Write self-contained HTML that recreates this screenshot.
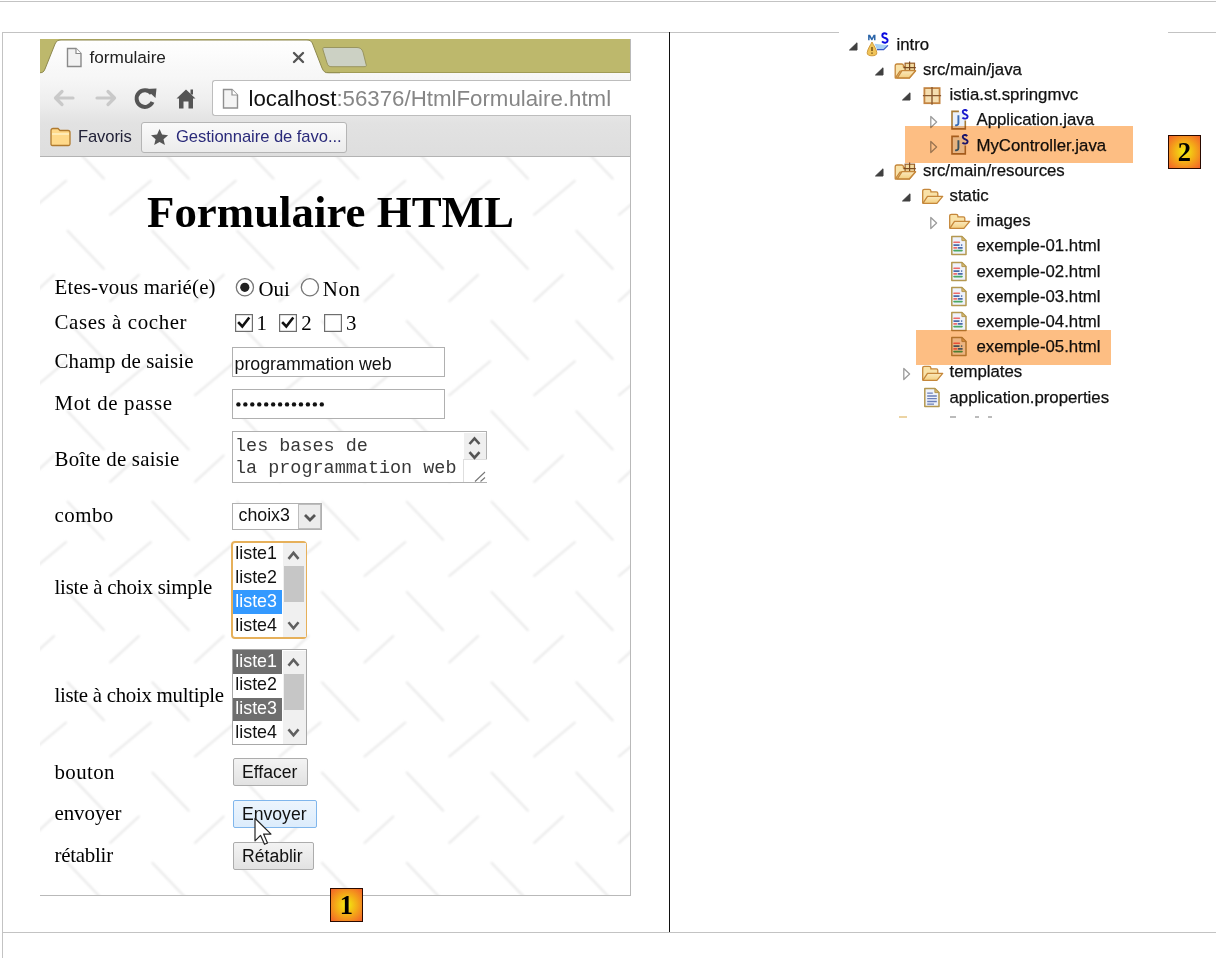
<!DOCTYPE html><html><head><meta charset="utf-8"><style>html,body{margin:0;padding:0;background:#fff;}#root{position:relative;width:1216px;height:958px;overflow:hidden;background:#fff}</style></head><body><div id="root"><div style="position:absolute;left:0px;top:1px;width:1216px;height:1px;background:#c3c3c3"></div>
<div style="position:absolute;left:2px;top:32px;width:1px;height:926px;background:#c3c3c3"></div>
<div style="position:absolute;left:2px;top:32px;width:1214px;height:1px;background:#c3c3c3"></div>
<div style="position:absolute;left:2px;top:932px;width:1214px;height:1px;background:#c3c3c3"></div>
<div style="position:absolute;left:669px;top:32px;width:1px;height:900px;background:#111"></div>
<div style="position:absolute;left:40px;top:39px;width:590px;height:34px;background:#bdb86c"></div>
<div style="position:absolute;left:40px;top:72px;width:590px;height:1px;background:#a09b55"></div>
<div style="position:absolute;left:40px;top:73px;width:590px;height:83px;background:linear-gradient(#f8f8f8 0%,#eeeeee 35%,#e2e2e2 60%,#dedede 100%)"></div>
<div style="position:absolute;left:40px;top:156px;width:590px;height:1px;background:#b3b3b3"></div>
<div style="position:absolute;left:630px;top:39px;width:1px;height:857px;background:#b9b9b9"></div>
<svg style="position:absolute;left:40px;top:39px;" width="300" height="36" viewBox="0 0 300 36"><defs><linearGradient id="tg" x1="0" y1="0" x2="0" y2="1"><stop offset="0" stop-color="#ffffff"/><stop offset="1" stop-color="#f7f7f7"/></linearGradient></defs><path d="M-1,35 L-1,34 C2,34 4,33 5,30 L15,5 C16.3,2 18,1 21,1 L267,1 C270,1 271.5,2 272.7,5 L282,29 C283.5,32.5 285,34 289,34 L300,34 L300,35 Z" fill="url(#tg)"/><path d="M-1,34 C2,34 4,33 5,30 L15,5 C16.3,2 18,1 21,1 L267,1 C270,1 271.5,2 272.7,5 L282,29 C283.5,32.5 285,34 289,34 L300,34" fill="none" stroke="#8d884e" stroke-width="1"/><rect x="0" y="34.5" width="300" height="1.5" fill="#f7f7f7"/></svg>
<svg style="position:absolute;left:320px;top:45px;" width="50" height="25" viewBox="0 0 50 25"><path d="M4,2.5 L37,2.5 C40,2.5 42,4 43,7 L46,19 C47,21 46,21.7 44,21.7 L12,21.7 C9,21.7 8,21 7,18 L3,5 C2.5,3.5 3,2.5 4,2.5 Z" fill="#ccd1c4" stroke="#999560" stroke-width="1"/></svg>
<svg style="position:absolute;left:66px;top:47px;" width="17" height="21" viewBox="0 0 17 21"><path d="M1.5,1.5 L10,1.5 L15,6.5 L15,19.5 L1.5,19.5 Z" fill="#f2f2f2" stroke="#8a8a8a" stroke-width="1.4"/><path d="M10,1.5 L10,6.5 L15,6.5" fill="#fff" stroke="#8a8a8a" stroke-width="1.2"/></svg>
<div style="position:absolute;left:89.5px;top:47.93px;font-family:'Liberation Sans', sans-serif;font-weight:normal;font-size:17.2px;line-height:19.21px;color:#222;white-space:pre;letter-spacing:0.000px;">formulaire</div>
<svg style="position:absolute;left:292px;top:51px;" width="13" height="13" viewBox="0 0 13 13"><path d="M2,2 L11,11 M11,2 L2,11" stroke="#555" stroke-width="2.4" stroke-linecap="round"/></svg>
<svg style="position:absolute;left:50px;top:86px;" width="70" height="25" viewBox="0 0 70 25"><g stroke="#c9c9c9" stroke-width="3.2" fill="none" stroke-linecap="round" stroke-linejoin="round"><path d="M6,12 L23,12 M12,5.5 L5.5,12 L12,18.5"/><path d="M47,12 L64,12 M58,5.5 L64.5,12 L58,18.5"/></g></svg>
<svg style="position:absolute;left:132px;top:86px;" width="28" height="25" viewBox="0 0 28 25"><path d="M19.5,7.5 A8.3,8.3 0 1 0 20.5,16" fill="none" stroke="#555" stroke-width="4"/><path d="M14,3 L24.5,2.5 L23.5,12 Z" fill="#555"/></svg>
<svg style="position:absolute;left:174px;top:86px;" width="24" height="25" viewBox="0 0 24 25"><path d="M2.5,12.5 L12,3.5 L21.5,12.5 L19,12.5 L19,22.5 L14.5,22.5 L14.5,15.5 L9.5,15.5 L9.5,22.5 L5,22.5 L5,12.5 Z" fill="#555"/><rect x="16.5" y="3.5" width="2.5" height="5" fill="#555"/></svg>
<div style="position:absolute;left:212.2px;top:80px;width:419px;height:36.4px;background:#fff;border:1px solid #bdbdbd;border-right:none;border-radius:3px 0 0 3px;box-sizing:border-box"></div>
<svg style="position:absolute;left:222px;top:88px;" width="18" height="22" viewBox="0 0 18 22"><path d="M1.5,1.5 L10,1.5 L15.5,7 L15.5,20 L1.5,20 Z" fill="#f4f4f4" stroke="#8f8f8f" stroke-width="1.4"/><path d="M10,1.5 L10,7 L15.5,7" fill="#fff" stroke="#8f8f8f" stroke-width="1.2"/></svg>
<div style="position:absolute;left:248.5px;top:86.55px;font-family:'Liberation Sans', sans-serif;font-weight:normal;font-size:22.27px;line-height:24.88px;color:#111;white-space:pre;letter-spacing:0.000px;">localhost<span style="color:#868686">:56376/HtmlFormulaire.html</span></div>
<svg style="position:absolute;left:49px;top:126px;" width="24" height="21" viewBox="0 0 24 21"><path d="M2,4.5 C2,3 3,2.5 4,2.5 L9,2.5 L11,4.5 L19,4.5 C20.5,4.5 21,5.5 21,6.5 L21,18 C21,19 20.5,19.5 19.5,19.5 L3.5,19.5 C2.5,19.5 2,19 2,18 Z" fill="#ffd98a" stroke="#b07a2e" stroke-width="1.3"/><path d="M3,8 L20,8" stroke="#fff0c4" stroke-width="1.5"/></svg>
<div style="position:absolute;left:78px;top:128.18px;font-family:'Liberation Sans', sans-serif;font-weight:normal;font-size:16.6px;line-height:18.54px;color:#222238;white-space:pre;letter-spacing:-0.120px;">Favoris</div>
<div style="position:absolute;left:141px;top:122px;width:206px;height:31px;background:linear-gradient(#fafafa,#ececec);border:1px solid #b5b5b5;border-radius:3px;box-sizing:border-box"></div>
<svg style="position:absolute;left:149px;top:127px;" width="21" height="20" viewBox="0 0 21 20"><path transform="translate(0.9,0.6) scale(0.92)" d="M10.5,1.5 L13.2,7.6 L19.8,8.2 L14.8,12.6 L16.3,19 L10.5,15.6 L4.7,19 L6.2,12.6 L1.2,8.2 L7.8,7.6 Z" fill="#555"/></svg>
<div style="position:absolute;left:176px;top:128.18px;font-family:'Liberation Sans', sans-serif;font-weight:normal;font-size:16.6px;line-height:18.54px;color:#2a2a7a;white-space:pre;letter-spacing:-0.060px;">Gestionnaire de favo...</div>
<svg style="position:absolute;left:40px;top:157px;" width="590" height="738" viewBox="0 0 590 738"><defs><filter id="pb" x="-5%" y="-5%" width="110%" height="110%"><feGaussianBlur stdDeviation="0.8"/></filter></defs><rect width="590" height="738" fill="#fff"/><path d="M-142.6,-107.4 l37.5,39.3 M-184.9,-122.4 l42,-35 M-142.6,-17.1 l37.5,39.3 M-184.9,-35.8 l30,-27.5 M-142.6,73.2 l37.5,39.3 M-184.9,58.2 l42,-35 M-142.6,163.5 l37.5,39.3 M-184.9,144.8 l30,-27.5 M-142.6,253.8 l37.5,39.3 M-184.9,238.8 l42,-35 M-142.6,344.1 l37.5,39.3 M-184.9,325.4 l30,-27.5 M-142.6,434.4 l37.5,39.3 M-184.9,419.4 l42,-35 M-142.6,524.7 l37.5,39.3 M-184.9,506.0 l30,-27.5 M-142.6,615.0 l37.5,39.3 M-184.9,600.0 l42,-35 M-142.6,705.3 l37.5,39.3 M-184.9,686.6 l30,-27.5 M-142.6,795.6 l37.5,39.3 M-184.9,780.6 l42,-35 M-57.8,-107.4 l37.5,39.3 M-100.1,-122.4 l42,-35 M-57.8,-17.1 l37.5,39.3 M-100.1,-35.8 l30,-27.5 M-57.8,73.2 l37.5,39.3 M-100.1,58.2 l42,-35 M-57.8,163.5 l37.5,39.3 M-100.1,144.8 l30,-27.5 M-57.8,253.8 l37.5,39.3 M-100.1,238.8 l42,-35 M-57.8,344.1 l37.5,39.3 M-100.1,325.4 l30,-27.5 M-57.8,434.4 l37.5,39.3 M-100.1,419.4 l42,-35 M-57.8,524.7 l37.5,39.3 M-100.1,506.0 l30,-27.5 M-57.8,615.0 l37.5,39.3 M-100.1,600.0 l42,-35 M-57.8,705.3 l37.5,39.3 M-100.1,686.6 l30,-27.5 M-57.8,795.6 l37.5,39.3 M-100.1,780.6 l42,-35 M27.0,-107.4 l37.5,39.3 M-15.3,-122.4 l42,-35 M27.0,-17.1 l37.5,39.3 M-15.3,-35.8 l30,-27.5 M27.0,73.2 l37.5,39.3 M-15.3,58.2 l42,-35 M27.0,163.5 l37.5,39.3 M-15.3,144.8 l30,-27.5 M27.0,253.8 l37.5,39.3 M-15.3,238.8 l42,-35 M27.0,344.1 l37.5,39.3 M-15.3,325.4 l30,-27.5 M27.0,434.4 l37.5,39.3 M-15.3,419.4 l42,-35 M27.0,524.7 l37.5,39.3 M-15.3,506.0 l30,-27.5 M27.0,615.0 l37.5,39.3 M-15.3,600.0 l42,-35 M27.0,705.3 l37.5,39.3 M-15.3,686.6 l30,-27.5 M27.0,795.6 l37.5,39.3 M-15.3,780.6 l42,-35 M111.8,-107.4 l37.5,39.3 M69.5,-122.4 l42,-35 M111.8,-17.1 l37.5,39.3 M69.5,-35.8 l30,-27.5 M111.8,73.2 l37.5,39.3 M69.5,58.2 l42,-35 M111.8,163.5 l37.5,39.3 M69.5,144.8 l30,-27.5 M111.8,253.8 l37.5,39.3 M69.5,238.8 l42,-35 M111.8,344.1 l37.5,39.3 M69.5,325.4 l30,-27.5 M111.8,434.4 l37.5,39.3 M69.5,419.4 l42,-35 M111.8,524.7 l37.5,39.3 M69.5,506.0 l30,-27.5 M111.8,615.0 l37.5,39.3 M69.5,600.0 l42,-35 M111.8,705.3 l37.5,39.3 M69.5,686.6 l30,-27.5 M111.8,795.6 l37.5,39.3 M69.5,780.6 l42,-35 M196.6,-107.4 l37.5,39.3 M154.3,-122.4 l42,-35 M196.6,-17.1 l37.5,39.3 M154.3,-35.8 l30,-27.5 M196.6,73.2 l37.5,39.3 M154.3,58.2 l42,-35 M196.6,163.5 l37.5,39.3 M154.3,144.8 l30,-27.5 M196.6,253.8 l37.5,39.3 M154.3,238.8 l42,-35 M196.6,344.1 l37.5,39.3 M154.3,325.4 l30,-27.5 M196.6,434.4 l37.5,39.3 M154.3,419.4 l42,-35 M196.6,524.7 l37.5,39.3 M154.3,506.0 l30,-27.5 M196.6,615.0 l37.5,39.3 M154.3,600.0 l42,-35 M196.6,705.3 l37.5,39.3 M154.3,686.6 l30,-27.5 M196.6,795.6 l37.5,39.3 M154.3,780.6 l42,-35 M281.4,-107.4 l37.5,39.3 M239.1,-122.4 l42,-35 M281.4,-17.1 l37.5,39.3 M239.1,-35.8 l30,-27.5 M281.4,73.2 l37.5,39.3 M239.1,58.2 l42,-35 M281.4,163.5 l37.5,39.3 M239.1,144.8 l30,-27.5 M281.4,253.8 l37.5,39.3 M239.1,238.8 l42,-35 M281.4,344.1 l37.5,39.3 M239.1,325.4 l30,-27.5 M281.4,434.4 l37.5,39.3 M239.1,419.4 l42,-35 M281.4,524.7 l37.5,39.3 M239.1,506.0 l30,-27.5 M281.4,615.0 l37.5,39.3 M239.1,600.0 l42,-35 M281.4,705.3 l37.5,39.3 M239.1,686.6 l30,-27.5 M281.4,795.6 l37.5,39.3 M239.1,780.6 l42,-35 M366.2,-107.4 l37.5,39.3 M323.9,-122.4 l42,-35 M366.2,-17.1 l37.5,39.3 M323.9,-35.8 l30,-27.5 M366.2,73.2 l37.5,39.3 M323.9,58.2 l42,-35 M366.2,163.5 l37.5,39.3 M323.9,144.8 l30,-27.5 M366.2,253.8 l37.5,39.3 M323.9,238.8 l42,-35 M366.2,344.1 l37.5,39.3 M323.9,325.4 l30,-27.5 M366.2,434.4 l37.5,39.3 M323.9,419.4 l42,-35 M366.2,524.7 l37.5,39.3 M323.9,506.0 l30,-27.5 M366.2,615.0 l37.5,39.3 M323.9,600.0 l42,-35 M366.2,705.3 l37.5,39.3 M323.9,686.6 l30,-27.5 M366.2,795.6 l37.5,39.3 M323.9,780.6 l42,-35 M451.0,-107.4 l37.5,39.3 M408.7,-122.4 l42,-35 M451.0,-17.1 l37.5,39.3 M408.7,-35.8 l30,-27.5 M451.0,73.2 l37.5,39.3 M408.7,58.2 l42,-35 M451.0,163.5 l37.5,39.3 M408.7,144.8 l30,-27.5 M451.0,253.8 l37.5,39.3 M408.7,238.8 l42,-35 M451.0,344.1 l37.5,39.3 M408.7,325.4 l30,-27.5 M451.0,434.4 l37.5,39.3 M408.7,419.4 l42,-35 M451.0,524.7 l37.5,39.3 M408.7,506.0 l30,-27.5 M451.0,615.0 l37.5,39.3 M408.7,600.0 l42,-35 M451.0,705.3 l37.5,39.3 M408.7,686.6 l30,-27.5 M451.0,795.6 l37.5,39.3 M408.7,780.6 l42,-35 M535.8,-107.4 l37.5,39.3 M493.5,-122.4 l42,-35 M535.8,-17.1 l37.5,39.3 M493.5,-35.8 l30,-27.5 M535.8,73.2 l37.5,39.3 M493.5,58.2 l42,-35 M535.8,163.5 l37.5,39.3 M493.5,144.8 l30,-27.5 M535.8,253.8 l37.5,39.3 M493.5,238.8 l42,-35 M535.8,344.1 l37.5,39.3 M493.5,325.4 l30,-27.5 M535.8,434.4 l37.5,39.3 M493.5,419.4 l42,-35 M535.8,524.7 l37.5,39.3 M493.5,506.0 l30,-27.5 M535.8,615.0 l37.5,39.3 M493.5,600.0 l42,-35 M535.8,705.3 l37.5,39.3 M493.5,686.6 l30,-27.5 M535.8,795.6 l37.5,39.3 M493.5,780.6 l42,-35 M620.6,-107.4 l37.5,39.3 M578.3,-122.4 l42,-35 M620.6,-17.1 l37.5,39.3 M578.3,-35.8 l30,-27.5 M620.6,73.2 l37.5,39.3 M578.3,58.2 l42,-35 M620.6,163.5 l37.5,39.3 M578.3,144.8 l30,-27.5 M620.6,253.8 l37.5,39.3 M578.3,238.8 l42,-35 M620.6,344.1 l37.5,39.3 M578.3,325.4 l30,-27.5 M620.6,434.4 l37.5,39.3 M578.3,419.4 l42,-35 M620.6,524.7 l37.5,39.3 M578.3,506.0 l30,-27.5 M620.6,615.0 l37.5,39.3 M578.3,600.0 l42,-35 M620.6,705.3 l37.5,39.3 M578.3,686.6 l30,-27.5 M620.6,795.6 l37.5,39.3 M578.3,780.6 l42,-35 M705.4,-107.4 l37.5,39.3 M663.1,-122.4 l42,-35 M705.4,-17.1 l37.5,39.3 M663.1,-35.8 l30,-27.5 M705.4,73.2 l37.5,39.3 M663.1,58.2 l42,-35 M705.4,163.5 l37.5,39.3 M663.1,144.8 l30,-27.5 M705.4,253.8 l37.5,39.3 M663.1,238.8 l42,-35 M705.4,344.1 l37.5,39.3 M663.1,325.4 l30,-27.5 M705.4,434.4 l37.5,39.3 M663.1,419.4 l42,-35 M705.4,524.7 l37.5,39.3 M663.1,506.0 l30,-27.5 M705.4,615.0 l37.5,39.3 M663.1,600.0 l42,-35 M705.4,705.3 l37.5,39.3 M663.1,686.6 l30,-27.5 M705.4,795.6 l37.5,39.3 M663.1,780.6 l42,-35 M790.2,-107.4 l37.5,39.3 M747.9,-122.4 l42,-35 M790.2,-17.1 l37.5,39.3 M747.9,-35.8 l30,-27.5 M790.2,73.2 l37.5,39.3 M747.9,58.2 l42,-35 M790.2,163.5 l37.5,39.3 M747.9,144.8 l30,-27.5 M790.2,253.8 l37.5,39.3 M747.9,238.8 l42,-35 M790.2,344.1 l37.5,39.3 M747.9,325.4 l30,-27.5 M790.2,434.4 l37.5,39.3 M747.9,419.4 l42,-35 M790.2,524.7 l37.5,39.3 M747.9,506.0 l30,-27.5 M790.2,615.0 l37.5,39.3 M747.9,600.0 l42,-35 M790.2,705.3 l37.5,39.3 M747.9,686.6 l30,-27.5 M790.2,795.6 l37.5,39.3 M747.9,780.6 l42,-35" stroke="#e8e8e8" stroke-width="2" fill="none" filter="url(#pb)"/></svg>
<div style="position:absolute;left:40px;top:895px;width:591px;height:1px;background:#b9b9b9"></div>
<div style="position:absolute;left:147px;top:188.40px;font-family:'Liberation Serif', serif;font-weight:bold;font-size:44.89px;line-height:49.69px;color:#000;white-space:pre;letter-spacing:0.000px;">Formulaire HTML</div>
<div style="position:absolute;left:54.5px;top:275.78px;font-family:'Liberation Serif', serif;font-weight:normal;font-size:20.9px;line-height:23.14px;color:#000;white-space:pre;letter-spacing:0.159px;">Etes-vous marié(e)</div>
<div style="position:absolute;left:54.5px;top:310.58px;font-family:'Liberation Serif', serif;font-weight:normal;font-size:20.9px;line-height:23.14px;color:#000;white-space:pre;letter-spacing:0.608px;">Cases à cocher</div>
<div style="position:absolute;left:54.5px;top:349.58px;font-family:'Liberation Serif', serif;font-weight:normal;font-size:20.9px;line-height:23.14px;color:#000;white-space:pre;letter-spacing:0.143px;">Champ de saisie</div>
<div style="position:absolute;left:54.5px;top:392.38px;font-family:'Liberation Serif', serif;font-weight:normal;font-size:20.9px;line-height:23.14px;color:#000;white-space:pre;letter-spacing:0.655px;">Mot de passe</div>
<div style="position:absolute;left:54.5px;top:447.68px;font-family:'Liberation Serif', serif;font-weight:normal;font-size:20.9px;line-height:23.14px;color:#000;white-space:pre;letter-spacing:0.214px;">Boîte de saisie</div>
<div style="position:absolute;left:54.5px;top:504.08px;font-family:'Liberation Serif', serif;font-weight:normal;font-size:20.9px;line-height:23.14px;color:#000;white-space:pre;letter-spacing:0.475px;">combo</div>
<div style="position:absolute;left:54.5px;top:576.38px;font-family:'Liberation Serif', serif;font-weight:normal;font-size:20.9px;line-height:23.14px;color:#000;white-space:pre;letter-spacing:-0.216px;">liste à choix simple</div>
<div style="position:absolute;left:54.5px;top:684.38px;font-family:'Liberation Serif', serif;font-weight:normal;font-size:20.9px;line-height:23.14px;color:#000;white-space:pre;letter-spacing:-0.295px;">liste à choix multiple</div>
<div style="position:absolute;left:54.5px;top:760.68px;font-family:'Liberation Serif', serif;font-weight:normal;font-size:20.9px;line-height:23.14px;color:#000;white-space:pre;letter-spacing:0.380px;">bouton</div>
<div style="position:absolute;left:54.5px;top:801.78px;font-family:'Liberation Serif', serif;font-weight:normal;font-size:20.9px;line-height:23.14px;color:#000;white-space:pre;letter-spacing:-0.050px;">envoyer</div>
<div style="position:absolute;left:54.5px;top:843.88px;font-family:'Liberation Serif', serif;font-weight:normal;font-size:20.9px;line-height:23.14px;color:#000;white-space:pre;letter-spacing:-0.243px;">rétablir</div>
<svg style="position:absolute;left:235px;top:278px;" width="20" height="20" viewBox="0 0 20 20"><circle cx="9.9" cy="9.3" r="8.6" fill="#fff" stroke="#777" stroke-width="1.3"/><circle cx="9.8" cy="9.3" r="4.6" fill="#222"/></svg>
<div style="position:absolute;left:258.5px;top:277.68px;font-family:'Liberation Serif', serif;font-weight:normal;font-size:20.9px;line-height:23.14px;color:#000;white-space:pre;letter-spacing:0.000px;">Oui</div>
<svg style="position:absolute;left:300px;top:278px;" width="20" height="20" viewBox="0 0 20 20"><circle cx="9.9" cy="9.3" r="8.6" fill="#fff" stroke="#777" stroke-width="1.3"/></svg>
<div style="position:absolute;left:322.8px;top:277.68px;font-family:'Liberation Serif', serif;font-weight:normal;font-size:20.9px;line-height:23.14px;color:#000;white-space:pre;letter-spacing:0.600px;">Non</div>
<svg style="position:absolute;left:234.6px;top:313.7px;" width="18" height="18" viewBox="0 0 18 18"><rect x="0.6" y="0.6" width="16.8" height="16.8" fill="#fff" stroke="#6e6e6e" stroke-width="1.2"/><path d="M4,9 L7.3,12.5 L13.5,4.5" fill="none" stroke="#111" stroke-width="2.6" stroke-linecap="square"/></svg>
<div style="position:absolute;left:256.6px;top:312.08px;font-family:'Liberation Serif', serif;font-weight:normal;font-size:20.9px;line-height:23.14px;color:#000;white-space:pre;letter-spacing:0.000px;">1</div>
<svg style="position:absolute;left:279.2px;top:313.7px;" width="18" height="18" viewBox="0 0 18 18"><rect x="0.6" y="0.6" width="16.8" height="16.8" fill="#fff" stroke="#6e6e6e" stroke-width="1.2"/><path d="M4,9 L7.3,12.5 L13.5,4.5" fill="none" stroke="#111" stroke-width="2.6" stroke-linecap="square"/></svg>
<div style="position:absolute;left:301.3px;top:312.08px;font-family:'Liberation Serif', serif;font-weight:normal;font-size:20.9px;line-height:23.14px;color:#000;white-space:pre;letter-spacing:0.000px;">2</div>
<svg style="position:absolute;left:324.3px;top:313.7px;" width="18" height="18" viewBox="0 0 18 18"><rect x="0.6" y="0.6" width="16.8" height="16.8" fill="#fff" stroke="#6e6e6e" stroke-width="1.2"/></svg>
<div style="position:absolute;left:346px;top:312.08px;font-family:'Liberation Serif', serif;font-weight:normal;font-size:20.9px;line-height:23.14px;color:#000;white-space:pre;letter-spacing:0.000px;">3</div>
<div style="position:absolute;left:232px;top:347px;width:213px;height:30px;background:#fff;border:1.5px solid #b0b0b0;box-sizing:border-box"></div>
<div style="position:absolute;left:234.5px;top:354.69px;font-family:'Liberation Sans', sans-serif;font-weight:normal;font-size:17.8px;line-height:19.88px;color:#111;white-space:pre;letter-spacing:0.000px;">programmation web</div>
<div style="position:absolute;left:232px;top:389px;width:213px;height:30px;background:#fff;border:1.5px solid #b0b0b0;box-sizing:border-box"></div>
<svg style="position:absolute;left:235.5px;top:402.4px;" width="95" height="5" viewBox="0 0 95 5"><circle cx="2.40" cy="2.4" r="2.2" fill="#111"/><circle cx="9.35" cy="2.4" r="2.2" fill="#111"/><circle cx="16.30" cy="2.4" r="2.2" fill="#111"/><circle cx="23.25" cy="2.4" r="2.2" fill="#111"/><circle cx="30.20" cy="2.4" r="2.2" fill="#111"/><circle cx="37.15" cy="2.4" r="2.2" fill="#111"/><circle cx="44.10" cy="2.4" r="2.2" fill="#111"/><circle cx="51.05" cy="2.4" r="2.2" fill="#111"/><circle cx="58.00" cy="2.4" r="2.2" fill="#111"/><circle cx="64.95" cy="2.4" r="2.2" fill="#111"/><circle cx="71.90" cy="2.4" r="2.2" fill="#111"/><circle cx="78.85" cy="2.4" r="2.2" fill="#111"/><circle cx="85.80" cy="2.4" r="2.2" fill="#111"/></svg>
<div style="position:absolute;left:232px;top:431px;width:255px;height:52px;background:#fff;border:1.5px solid #b0b0b0;box-sizing:border-box"></div>
<div style="position:absolute;left:235px;top:436.91px;font-family:'Liberation Mono', monospace;font-weight:normal;font-size:18.47px;line-height:20.93px;color:#383838;white-space:pre;letter-spacing:0.000px;">les bases de</div>
<div style="position:absolute;left:235px;top:459.21px;font-family:'Liberation Mono', monospace;font-weight:normal;font-size:18.47px;line-height:20.93px;color:#383838;white-space:pre;letter-spacing:0.000px;">la programmation web</div>
<div style="position:absolute;left:463.5px;top:432.5px;width:22.5px;height:13.3px;background:#efefef"></div>
<div style="position:absolute;left:463.5px;top:446.3px;width:22.5px;height:12.7px;background:#efefef"></div>
<div style="position:absolute;left:462.5px;top:459px;width:24px;height:22.5px;background:#fff;border-left:1px solid #dedede;border-top:1px solid #dedede;box-sizing:border-box"></div>
<svg style="position:absolute;left:463px;top:432px;" width="23" height="28" viewBox="0 0 23 28"><path d="M6.5,12 L11.5,6.5 L16.5,12 M6.5,20.2 L11.5,25.7 L16.5,20.2" fill="none" stroke="#555" stroke-width="2.6" stroke-linejoin="miter"/></svg>
<svg style="position:absolute;left:470px;top:469px;" width="16" height="13" viewBox="0 0 16 13"><path d="M15,3 L5,12.5 M15,8.5 L10.5,12.5" stroke="#777" stroke-width="1.1"/></svg>
<div style="position:absolute;left:232px;top:502.5px;width:90px;height:27px;background:#fff;border:1.5px solid #b0b0b0;box-sizing:border-box"></div>
<div style="position:absolute;left:297.5px;top:503.5px;width:23.5px;height:25px;background:#ececec;border:1.5px solid #bdbdbd;box-sizing:border-box"></div>
<svg style="position:absolute;left:297.5px;top:503.5px;" width="24" height="25" viewBox="0 0 24 25"><path d="M7,11 L12,16 L17,11" fill="none" stroke="#555" stroke-width="2.8"/></svg>
<div style="position:absolute;left:238.5px;top:506.49px;font-family:'Liberation Sans', sans-serif;font-weight:normal;font-size:17.8px;line-height:19.88px;color:#111;white-space:pre;letter-spacing:0.000px;">choix3</div>
<div style="position:absolute;left:231.2px;top:540.7px;width:76.1px;height:97.9px;background:#fff;border:2px solid #e6b05a;border-radius:4px;box-sizing:border-box"></div>
<div style="position:absolute;left:283.4px;top:542.7px;width:22.3px;height:93.89999999999998px;background:#f0f0f0"></div>
<div style="position:absolute;left:284px;top:566.2px;width:20.1px;height:36.2px;background:#c6c6c6"></div>
<svg style="position:absolute;left:283.4px;top:540.7px;" width="23" height="97.89999999999998" viewBox="0 0 23 97.89999999999998"><path d="M5.5,17.8 L10.5,11.799999999999999 L15.5,17.8 M5.5,81.3 L10.5,87.3 L15.5,81.3" fill="none" stroke="#606060" stroke-width="2.6"/></svg>
<div style="position:absolute;left:235.3px;top:544.44px;font-family:'Liberation Sans', sans-serif;font-weight:normal;font-size:17.86px;line-height:19.95px;color:#111;white-space:pre;letter-spacing:0.000px;">liste1</div>
<div style="position:absolute;left:235.3px;top:568.19px;font-family:'Liberation Sans', sans-serif;font-weight:normal;font-size:17.86px;line-height:19.95px;color:#111;white-space:pre;letter-spacing:0.000px;">liste2</div>
<div style="position:absolute;left:233px;top:590.2px;width:48.8px;height:23.6px;background:#3399ff"></div>
<div style="position:absolute;left:235.3px;top:591.94px;font-family:'Liberation Sans', sans-serif;font-weight:normal;font-size:17.86px;line-height:19.95px;color:#fff;white-space:pre;letter-spacing:0.000px;">liste3</div>
<div style="position:absolute;left:235.3px;top:615.69px;font-family:'Liberation Sans', sans-serif;font-weight:normal;font-size:17.86px;line-height:19.95px;color:#111;white-space:pre;letter-spacing:0.000px;">liste4</div>
<div style="position:absolute;left:232px;top:649.3px;width:74.8px;height:95.8px;background:#fff;border:1.5px solid #a8a8a8;border-radius:0px;box-sizing:border-box"></div>
<div style="position:absolute;left:283.4px;top:650.8px;width:22.3px;height:92.80000000000007px;background:#f0f0f0"></div>
<div style="position:absolute;left:284px;top:674.3px;width:20.1px;height:35.7px;background:#c6c6c6"></div>
<svg style="position:absolute;left:283.4px;top:649.3px;" width="23" height="95.80000000000007" viewBox="0 0 23 95.80000000000007"><path d="M5.5,16.7 L10.5,10.7 L15.5,16.7 M5.5,80.3 L10.5,86.3 L15.5,80.3" fill="none" stroke="#606060" stroke-width="2.6"/></svg>
<div style="position:absolute;left:233px;top:650.0px;width:48.8px;height:23.6px;background:#6e6e6e"></div>
<div style="position:absolute;left:235.3px;top:651.74px;font-family:'Liberation Sans', sans-serif;font-weight:normal;font-size:17.86px;line-height:19.95px;color:#fff;white-space:pre;letter-spacing:0.000px;">liste1</div>
<div style="position:absolute;left:235.3px;top:675.49px;font-family:'Liberation Sans', sans-serif;font-weight:normal;font-size:17.86px;line-height:19.95px;color:#111;white-space:pre;letter-spacing:0.000px;">liste2</div>
<div style="position:absolute;left:233px;top:697.5px;width:48.8px;height:23.6px;background:#6e6e6e"></div>
<div style="position:absolute;left:235.3px;top:699.24px;font-family:'Liberation Sans', sans-serif;font-weight:normal;font-size:17.86px;line-height:19.95px;color:#fff;white-space:pre;letter-spacing:0.000px;">liste3</div>
<div style="position:absolute;left:235.3px;top:722.99px;font-family:'Liberation Sans', sans-serif;font-weight:normal;font-size:17.86px;line-height:19.95px;color:#111;white-space:pre;letter-spacing:0.000px;">liste4</div>
<div style="position:absolute;left:233px;top:758.1px;width:75.19999999999999px;height:27.600000000000023px;background:linear-gradient(#f3f3f3,#e2e2e2);border:1.5px solid #acacac;box-sizing:border-box;border-radius:2px"></div>
<div style="position:absolute;left:242px;top:762.87px;font-family:'Liberation Sans', sans-serif;font-weight:normal;font-size:17.6px;line-height:19.66px;color:#111;white-space:pre;letter-spacing:0.000px;">Effacer</div>
<div style="position:absolute;left:233px;top:800.1px;width:84px;height:27.600000000000023px;background:linear-gradient(#edf5fd,#dcecfc);border:1.5px solid #80b6ec;box-sizing:border-box;border-radius:2px"></div>
<div style="position:absolute;left:242px;top:804.87px;font-family:'Liberation Sans', sans-serif;font-weight:normal;font-size:17.6px;line-height:19.66px;color:#111;white-space:pre;letter-spacing:0.000px;">Envoyer</div>
<div style="position:absolute;left:233px;top:842.1px;width:80.80000000000001px;height:27.600000000000023px;background:linear-gradient(#f3f3f3,#e2e2e2);border:1.5px solid #acacac;box-sizing:border-box;border-radius:2px"></div>
<div style="position:absolute;left:242px;top:846.87px;font-family:'Liberation Sans', sans-serif;font-weight:normal;font-size:17.6px;line-height:19.66px;color:#111;white-space:pre;letter-spacing:0.000px;">Rétablir</div>
<svg style="position:absolute;left:252.8px;top:816.3px;" width="22" height="32" viewBox="0 0 22 32"><path d="M2,2.3 L2,24.8 L7.5,19.3 L11.5,28.3 L14.5,27 L10.6,18.1 L18,18.1 Z" fill="#fff" stroke="#222" stroke-width="1.2" stroke-linejoin="round"/></svg>
<div style="position:absolute;left:330px;top:888px;width:33px;height:34px;box-sizing:border-box;border:1.5px solid #2a0a00;background:radial-gradient(circle at 50% 50%,#f2ee10 0%,#f4a818 50%,#f3602a 100%)"></div>
<div style="position:absolute;left:339.8px;top:890.69px;font-family:'Liberation Serif', serif;font-weight:bold;font-size:26.5px;line-height:29.34px;color:#000;white-space:pre;letter-spacing:0.000px;">1</div>
<div style="position:absolute;left:839px;top:32px;width:329px;height:386px;background:#fff"></div>
<svg style="position:absolute;left:847.8px;top:40.5px;" width="11" height="11" viewBox="0 0 11 11"><path d="M1.5,9 L9,1.8 L9,9 Z" fill="#404040" stroke="#404040" stroke-width="1" stroke-linejoin="round"/></svg>
<svg style="position:absolute;left:862px;top:30px;" width="30" height="28" viewBox="0 0 30 28"><path d="M6.1,10.3 L6.1,4.7 L8.1,4.7 L9.9,7.9 L11.6,4.7 L13.5,4.7 L13.5,10.3 L12,10.3 L12,7.2 L10.3,10.2 L9.4,10.2 L7.6,7.2 L7.6,10.3 Z" fill="#2a64a8"/><path d="M25,4.6 C24.2,3.4 22.6,3 21.5,3.5 C19.9,4.2 19.9,6.6 21.6,7.4 L24.3,8.5 C26.3,9.5 26,12.4 23.4,12.7 C22,12.9 20.9,12.4 20.1,11.4" fill="none" stroke="#0a0ae0" stroke-width="2"/><path d="M12.5,13.8 L26,15.3 L21.6,19.7 L15,19.7 Z" fill="#a8d0f4"/><path d="M15,19.7 L21.6,19.7 L26,15.3" fill="none" stroke="#3a5ac8" stroke-width="1.2"/><path d="M10,12 C8.5,15 5.6,19 5.2,22.6 C5,25 7,25.8 10,25.8 C13,25.8 15,25 14.8,22.6 C14.4,19 11.5,15 10,12 Z" fill="#f0c45a" stroke="#cc9433" stroke-width="0.9"/><path d="M10,17 L10,21 M10,22.5 L10,23.8" stroke="#6a4810" stroke-width="1.4"/></svg>
<div style="position:absolute;left:896.5px;top:35.70px;font-family:'Liberation Sans', sans-serif;font-weight:normal;font-size:16.8px;line-height:18.77px;color:#111;white-space:pre;letter-spacing:0.000px;-webkit-text-stroke:0.25px #111">intro</div>
<svg style="position:absolute;left:874.3px;top:65.7px;" width="11" height="11" viewBox="0 0 11 11"><path d="M1.5,9 L9,1.8 L9,9 Z" fill="#404040" stroke="#404040" stroke-width="1" stroke-linejoin="round"/></svg>
<svg style="position:absolute;left:894px;top:60.8px;" width="23" height="18" viewBox="0 0 23 18"><defs><linearGradient id="fgr" x1="0" y1="0" x2="0" y2="1"><stop offset="0" stop-color="#fbe9bd"/><stop offset="1" stop-color="#f3cf80"/></linearGradient></defs><g transform="translate(0,2)"><path d="M1.2,14.8 L1.2,3 Q1.2,1 3,1 L7.6,1 Q9.4,1 9.4,2.6 L9.4,3.6 L14.8,3.6 Q16.3,3.6 16.3,5 L16.3,8.3" fill="#f9e2a8" stroke="#c5873a" stroke-width="1.3"/><path d="M1.3,15 L6,8.1 L21.2,8.1 L15.4,15 Z" fill="url(#fgr)" stroke="#c5873a" stroke-width="1.3" stroke-linejoin="round"/></g><rect x="11.1" y="2.2" width="9.4" height="7.3" fill="#f3dba0" stroke="#9a5f28" stroke-width="1.2"/><path d="M15.6,0.4 L15.6,9.5 M9.4,6.6 L21.8,6.6" stroke="#7a4a20" stroke-width="1.2"/><path d="M3.3,16.8 L8,9.7 L21.6,9.7 L15.4,16.8 Z" fill="url(#fgr)" stroke="#c5873a" stroke-width="1.3" stroke-linejoin="round"/></svg>
<div style="position:absolute;left:923px;top:60.90px;font-family:'Liberation Sans', sans-serif;font-weight:normal;font-size:16.8px;line-height:18.77px;color:#111;white-space:pre;letter-spacing:0.000px;-webkit-text-stroke:0.25px #111">src/main/java</div>
<svg style="position:absolute;left:900.8px;top:90.9px;" width="11" height="11" viewBox="0 0 11 11"><path d="M1.5,9 L9,1.8 L9,9 Z" fill="#404040" stroke="#404040" stroke-width="1" stroke-linejoin="round"/></svg>
<svg style="position:absolute;left:922px;top:86.9px;" width="20" height="19" viewBox="0 0 20 19"><rect x="2.4" y="1.1" width="15.2" height="15.1" fill="#f5deb0" stroke="#c38441" stroke-width="1.8"/><path d="M10,-0.5 L10,17.8 M0.9,8.6 L19.1,8.6" stroke="#8a5a30" stroke-width="1.4"/></svg>
<div style="position:absolute;left:949.5px;top:86.10px;font-family:'Liberation Sans', sans-serif;font-weight:normal;font-size:16.8px;line-height:18.77px;color:#111;white-space:pre;letter-spacing:0.000px;-webkit-text-stroke:0.25px #111">istia.st.springmvc</div>
<svg style="position:absolute;left:929px;top:114.89999999999999px;" width="10" height="15" viewBox="0 0 10 15"><path d="M1.8,1.5 L7.6,7 L1.8,12.5 Z" fill="#fff" stroke="#9c9c9c" stroke-width="1.3" stroke-linejoin="round"/></svg>
<svg style="position:absolute;left:950px;top:108.99999999999999px;" width="19" height="22" viewBox="0 0 19 22"><rect x="2" y="2.4" width="13.3" height="17.5" fill="#e9f0fa"/><path d="M8.9,2.4 L2,2.4 L2,19.9 L15.3,19.9 L15.3,11.6" fill="none" stroke="#a77b35" stroke-width="1.6"/><path d="M8.4,6.3 L8.4,14 C8.4,16 7,16.6 5.2,16.1" fill="none" stroke="#3a6cb5" stroke-width="1.9"/><path d="M17.2,2.1 C16.4,1 14.8,0.8 13.9,1.2 C12.4,1.8 12.4,3.9 13.9,4.6 L16.4,5.8 C18.2,6.7 18,9.3 15.7,9.6 C14.3,9.8 13.2,9.4 12.4,8.6" fill="none" stroke="#1a1acc" stroke-width="1.9"/></svg>
<div style="position:absolute;left:976.5px;top:111.30px;font-family:'Liberation Sans', sans-serif;font-weight:normal;font-size:16.8px;line-height:18.77px;color:#111;white-space:pre;letter-spacing:0.000px;-webkit-text-stroke:0.25px #111">Application.java</div>
<svg style="position:absolute;left:929px;top:140.1px;" width="10" height="15" viewBox="0 0 10 15"><path d="M1.8,1.5 L7.6,7 L1.8,12.5 Z" fill="#fff" stroke="#9c9c9c" stroke-width="1.3" stroke-linejoin="round"/></svg>
<svg style="position:absolute;left:950px;top:134.20000000000002px;" width="19" height="22" viewBox="0 0 19 22"><rect x="2" y="2.4" width="13.3" height="17.5" fill="#e9f0fa"/><path d="M8.9,2.4 L2,2.4 L2,19.9 L15.3,19.9 L15.3,11.6" fill="none" stroke="#a77b35" stroke-width="1.6"/><path d="M8.4,6.3 L8.4,14 C8.4,16 7,16.6 5.2,16.1" fill="none" stroke="#3a6cb5" stroke-width="1.9"/><path d="M17.2,2.1 C16.4,1 14.8,0.8 13.9,1.2 C12.4,1.8 12.4,3.9 13.9,4.6 L16.4,5.8 C18.2,6.7 18,9.3 15.7,9.6 C14.3,9.8 13.2,9.4 12.4,8.6" fill="none" stroke="#1a1acc" stroke-width="1.9"/></svg>
<div style="position:absolute;left:976.5px;top:136.50px;font-family:'Liberation Sans', sans-serif;font-weight:normal;font-size:16.8px;line-height:18.77px;color:#111;white-space:pre;letter-spacing:0.000px;-webkit-text-stroke:0.25px #111">MyController.java</div>
<svg style="position:absolute;left:874.3px;top:166.5px;" width="11" height="11" viewBox="0 0 11 11"><path d="M1.5,9 L9,1.8 L9,9 Z" fill="#404040" stroke="#404040" stroke-width="1" stroke-linejoin="round"/></svg>
<svg style="position:absolute;left:894px;top:161.6px;" width="23" height="18" viewBox="0 0 23 18"><defs><linearGradient id="fgr" x1="0" y1="0" x2="0" y2="1"><stop offset="0" stop-color="#fbe9bd"/><stop offset="1" stop-color="#f3cf80"/></linearGradient></defs><g transform="translate(0,2)"><path d="M1.2,14.8 L1.2,3 Q1.2,1 3,1 L7.6,1 Q9.4,1 9.4,2.6 L9.4,3.6 L14.8,3.6 Q16.3,3.6 16.3,5 L16.3,8.3" fill="#f9e2a8" stroke="#c5873a" stroke-width="1.3"/><path d="M1.3,15 L6,8.1 L21.2,8.1 L15.4,15 Z" fill="url(#fgr)" stroke="#c5873a" stroke-width="1.3" stroke-linejoin="round"/></g><rect x="11.1" y="2.2" width="9.4" height="7.3" fill="#f3dba0" stroke="#9a5f28" stroke-width="1.2"/><path d="M15.6,0.4 L15.6,9.5 M9.4,6.6 L21.8,6.6" stroke="#7a4a20" stroke-width="1.2"/><path d="M3.3,16.8 L8,9.7 L21.6,9.7 L15.4,16.8 Z" fill="url(#fgr)" stroke="#c5873a" stroke-width="1.3" stroke-linejoin="round"/></svg>
<div style="position:absolute;left:923px;top:161.70px;font-family:'Liberation Sans', sans-serif;font-weight:normal;font-size:16.8px;line-height:18.77px;color:#111;white-space:pre;letter-spacing:0.000px;-webkit-text-stroke:0.25px #111">src/main/resources</div>
<svg style="position:absolute;left:900.8px;top:191.7px;" width="11" height="11" viewBox="0 0 11 11"><path d="M1.5,9 L9,1.8 L9,9 Z" fill="#404040" stroke="#404040" stroke-width="1" stroke-linejoin="round"/></svg>
<svg style="position:absolute;left:921px;top:188.2px;" width="23" height="17" viewBox="0 0 23 17"><defs><linearGradient id="fgr" x1="0" y1="0" x2="0" y2="1"><stop offset="0" stop-color="#fbe9bd"/><stop offset="1" stop-color="#f3cf80"/></linearGradient></defs><g transform="translate(0.5,0.3)"><path d="M1.2,14.8 L1.2,3 Q1.2,1 3,1 L7.6,1 Q9.4,1 9.4,2.6 L9.4,3.6 L14.8,3.6 Q16.3,3.6 16.3,5 L16.3,8.3" fill="#f9e2a8" stroke="#c5873a" stroke-width="1.3"/><path d="M1.3,15 L6,8.1 L21.2,8.1 L15.4,15 Z" fill="url(#fgr)" stroke="#c5873a" stroke-width="1.3" stroke-linejoin="round"/></g></svg>
<div style="position:absolute;left:949.5px;top:186.90px;font-family:'Liberation Sans', sans-serif;font-weight:normal;font-size:16.8px;line-height:18.77px;color:#111;white-space:pre;letter-spacing:0.000px;-webkit-text-stroke:0.25px #111">static</div>
<svg style="position:absolute;left:929px;top:215.7px;" width="10" height="15" viewBox="0 0 10 15"><path d="M1.8,1.5 L7.6,7 L1.8,12.5 Z" fill="#fff" stroke="#9c9c9c" stroke-width="1.3" stroke-linejoin="round"/></svg>
<svg style="position:absolute;left:948px;top:213.4px;" width="23" height="17" viewBox="0 0 23 17"><defs><linearGradient id="fgr" x1="0" y1="0" x2="0" y2="1"><stop offset="0" stop-color="#fbe9bd"/><stop offset="1" stop-color="#f3cf80"/></linearGradient></defs><g transform="translate(0.5,0.3)"><path d="M1.2,14.8 L1.2,3 Q1.2,1 3,1 L7.6,1 Q9.4,1 9.4,2.6 L9.4,3.6 L14.8,3.6 Q16.3,3.6 16.3,5 L16.3,8.3" fill="#f9e2a8" stroke="#c5873a" stroke-width="1.3"/><path d="M1.3,15 L6,8.1 L21.2,8.1 L15.4,15 Z" fill="url(#fgr)" stroke="#c5873a" stroke-width="1.3" stroke-linejoin="round"/></g></svg>
<div style="position:absolute;left:976.5px;top:212.10px;font-family:'Liberation Sans', sans-serif;font-weight:normal;font-size:16.8px;line-height:18.77px;color:#111;white-space:pre;letter-spacing:0.000px;-webkit-text-stroke:0.25px #111">images</div>
<svg style="position:absolute;left:950px;top:235.39999999999998px;" width="18" height="21" viewBox="0 0 18 21"><path d="M1.8,1.4 L11.9,1.4 L16,5.6 L16,19.5 L1.8,19.5 Z" fill="#eef2fb" stroke="#b49850" stroke-width="1.5" stroke-linejoin="round"/><path d="M11.9,1.4 L11.9,5.6 L16,5.6 Z" fill="#d9bb72" stroke="#b49850" stroke-width="1"/><g stroke-width="1.6" stroke-linecap="round"><path d="M4,7.3 L9.4,7.3" stroke="#ec6a6a"/><path d="M4,10.1 L9,10.1 M11.6,10.1 L11.7,10.1" stroke="#4a6aa8"/><path d="M4,12.9 L6.5,12.9" stroke="#ec6a6a"/><path d="M8.4,12.9 L12,12.9" stroke="#4a6aa8"/><path d="M4,15.6 L12,15.6" stroke="#4aa860"/></g></svg>
<div style="position:absolute;left:976.5px;top:237.30px;font-family:'Liberation Sans', sans-serif;font-weight:normal;font-size:16.8px;line-height:18.77px;color:#111;white-space:pre;letter-spacing:0.000px;-webkit-text-stroke:0.25px #111">exemple-01.html</div>
<svg style="position:absolute;left:950px;top:260.59999999999997px;" width="18" height="21" viewBox="0 0 18 21"><path d="M1.8,1.4 L11.9,1.4 L16,5.6 L16,19.5 L1.8,19.5 Z" fill="#eef2fb" stroke="#b49850" stroke-width="1.5" stroke-linejoin="round"/><path d="M11.9,1.4 L11.9,5.6 L16,5.6 Z" fill="#d9bb72" stroke="#b49850" stroke-width="1"/><g stroke-width="1.6" stroke-linecap="round"><path d="M4,7.3 L9.4,7.3" stroke="#ec6a6a"/><path d="M4,10.1 L9,10.1 M11.6,10.1 L11.7,10.1" stroke="#4a6aa8"/><path d="M4,12.9 L6.5,12.9" stroke="#ec6a6a"/><path d="M8.4,12.9 L12,12.9" stroke="#4a6aa8"/><path d="M4,15.6 L12,15.6" stroke="#4aa860"/></g></svg>
<div style="position:absolute;left:976.5px;top:262.50px;font-family:'Liberation Sans', sans-serif;font-weight:normal;font-size:16.8px;line-height:18.77px;color:#111;white-space:pre;letter-spacing:0.000px;-webkit-text-stroke:0.25px #111">exemple-02.html</div>
<svg style="position:absolute;left:950px;top:285.8px;" width="18" height="21" viewBox="0 0 18 21"><path d="M1.8,1.4 L11.9,1.4 L16,5.6 L16,19.5 L1.8,19.5 Z" fill="#eef2fb" stroke="#b49850" stroke-width="1.5" stroke-linejoin="round"/><path d="M11.9,1.4 L11.9,5.6 L16,5.6 Z" fill="#d9bb72" stroke="#b49850" stroke-width="1"/><g stroke-width="1.6" stroke-linecap="round"><path d="M4,7.3 L9.4,7.3" stroke="#ec6a6a"/><path d="M4,10.1 L9,10.1 M11.6,10.1 L11.7,10.1" stroke="#4a6aa8"/><path d="M4,12.9 L6.5,12.9" stroke="#ec6a6a"/><path d="M8.4,12.9 L12,12.9" stroke="#4a6aa8"/><path d="M4,15.6 L12,15.6" stroke="#4aa860"/></g></svg>
<div style="position:absolute;left:976.5px;top:287.70px;font-family:'Liberation Sans', sans-serif;font-weight:normal;font-size:16.8px;line-height:18.77px;color:#111;white-space:pre;letter-spacing:0.000px;-webkit-text-stroke:0.25px #111">exemple-03.html</div>
<svg style="position:absolute;left:950px;top:311.0px;" width="18" height="21" viewBox="0 0 18 21"><path d="M1.8,1.4 L11.9,1.4 L16,5.6 L16,19.5 L1.8,19.5 Z" fill="#eef2fb" stroke="#b49850" stroke-width="1.5" stroke-linejoin="round"/><path d="M11.9,1.4 L11.9,5.6 L16,5.6 Z" fill="#d9bb72" stroke="#b49850" stroke-width="1"/><g stroke-width="1.6" stroke-linecap="round"><path d="M4,7.3 L9.4,7.3" stroke="#ec6a6a"/><path d="M4,10.1 L9,10.1 M11.6,10.1 L11.7,10.1" stroke="#4a6aa8"/><path d="M4,12.9 L6.5,12.9" stroke="#ec6a6a"/><path d="M8.4,12.9 L12,12.9" stroke="#4a6aa8"/><path d="M4,15.6 L12,15.6" stroke="#4aa860"/></g></svg>
<div style="position:absolute;left:976.5px;top:312.90px;font-family:'Liberation Sans', sans-serif;font-weight:normal;font-size:16.8px;line-height:18.77px;color:#111;white-space:pre;letter-spacing:0.000px;-webkit-text-stroke:0.25px #111">exemple-04.html</div>
<svg style="position:absolute;left:950px;top:336.2px;" width="18" height="21" viewBox="0 0 18 21"><path d="M1.8,1.4 L11.9,1.4 L16,5.6 L16,19.5 L1.8,19.5 Z" fill="#eef2fb" stroke="#b49850" stroke-width="1.5" stroke-linejoin="round"/><path d="M11.9,1.4 L11.9,5.6 L16,5.6 Z" fill="#d9bb72" stroke="#b49850" stroke-width="1"/><g stroke-width="1.6" stroke-linecap="round"><path d="M4,7.3 L9.4,7.3" stroke="#ec6a6a"/><path d="M4,10.1 L9,10.1 M11.6,10.1 L11.7,10.1" stroke="#4a6aa8"/><path d="M4,12.9 L6.5,12.9" stroke="#ec6a6a"/><path d="M8.4,12.9 L12,12.9" stroke="#4a6aa8"/><path d="M4,15.6 L12,15.6" stroke="#4aa860"/></g></svg>
<div style="position:absolute;left:976.5px;top:338.10px;font-family:'Liberation Sans', sans-serif;font-weight:normal;font-size:16.8px;line-height:18.77px;color:#111;white-space:pre;letter-spacing:0.000px;-webkit-text-stroke:0.25px #111">exemple-05.html</div>
<svg style="position:absolute;left:901.8px;top:366.9px;" width="10" height="15" viewBox="0 0 10 15"><path d="M1.8,1.5 L7.6,7 L1.8,12.5 Z" fill="#fff" stroke="#9c9c9c" stroke-width="1.3" stroke-linejoin="round"/></svg>
<svg style="position:absolute;left:921px;top:364.59999999999997px;" width="23" height="17" viewBox="0 0 23 17"><defs><linearGradient id="fgr" x1="0" y1="0" x2="0" y2="1"><stop offset="0" stop-color="#fbe9bd"/><stop offset="1" stop-color="#f3cf80"/></linearGradient></defs><g transform="translate(0.5,0.3)"><path d="M1.2,14.8 L1.2,3 Q1.2,1 3,1 L7.6,1 Q9.4,1 9.4,2.6 L9.4,3.6 L14.8,3.6 Q16.3,3.6 16.3,5 L16.3,8.3" fill="#f9e2a8" stroke="#c5873a" stroke-width="1.3"/><path d="M1.3,15 L6,8.1 L21.2,8.1 L15.4,15 Z" fill="url(#fgr)" stroke="#c5873a" stroke-width="1.3" stroke-linejoin="round"/></g></svg>
<div style="position:absolute;left:949.5px;top:363.30px;font-family:'Liberation Sans', sans-serif;font-weight:normal;font-size:16.8px;line-height:18.77px;color:#111;white-space:pre;letter-spacing:0.000px;-webkit-text-stroke:0.25px #111">templates</div>
<svg style="position:absolute;left:923px;top:387.00000000000006px;" width="18" height="21" viewBox="0 0 18 21"><path d="M1.8,1.4 L11.9,1.4 L16,5.6 L16,19.5 L1.8,19.5 Z" fill="#eef2fb" stroke="#b49850" stroke-width="1.5" stroke-linejoin="round"/><path d="M11.9,1.4 L11.9,5.6 L16,5.6 Z" fill="#d9bb72" stroke="#b49850" stroke-width="1"/><g stroke="#6a7eb8" stroke-width="1.3"><path d="M4.2,6.1 L9.8,6.1 M4.2,9 L13.8,9 M4.2,11.6 L13.8,11.6 M4.2,14.5 L13.8,14.5 M4.2,17.2 L11,17.2"/></g></svg>
<div style="position:absolute;left:949.5px;top:388.50px;font-family:'Liberation Sans', sans-serif;font-weight:normal;font-size:16.8px;line-height:18.77px;color:#111;white-space:pre;letter-spacing:0.000px;-webkit-text-stroke:0.25px #111">application.properties</div>
<div style="position:absolute;left:899px;top:416px;width:8px;height:2px;background:#ecd4a4"></div>
<div style="position:absolute;left:950px;top:416px;width:6px;height:2px;background:#bbb"></div>
<div style="position:absolute;left:975px;top:416px;width:4px;height:2px;background:#bbb"></div>
<div style="position:absolute;left:988px;top:416px;width:4px;height:2px;background:#bbb"></div>
<div style="position:absolute;left:905px;top:126px;width:228px;height:37px;background:#fdbe83;mix-blend-mode:multiply"></div>
<div style="position:absolute;left:916px;top:330px;width:195px;height:35px;background:#fdbe83;mix-blend-mode:multiply"></div>
<div style="position:absolute;left:1168px;top:135px;width:33px;height:34px;box-sizing:border-box;border:1.5px solid #2a0a00;background:radial-gradient(circle at 50% 50%,#f2ee10 0%,#f4a818 50%,#f3602a 100%)"></div>
<div style="position:absolute;left:1177.8px;top:137.69px;font-family:'Liberation Serif', serif;font-weight:bold;font-size:26.5px;line-height:29.34px;color:#000;white-space:pre;letter-spacing:0.000px;">2</div></div></body></html>
